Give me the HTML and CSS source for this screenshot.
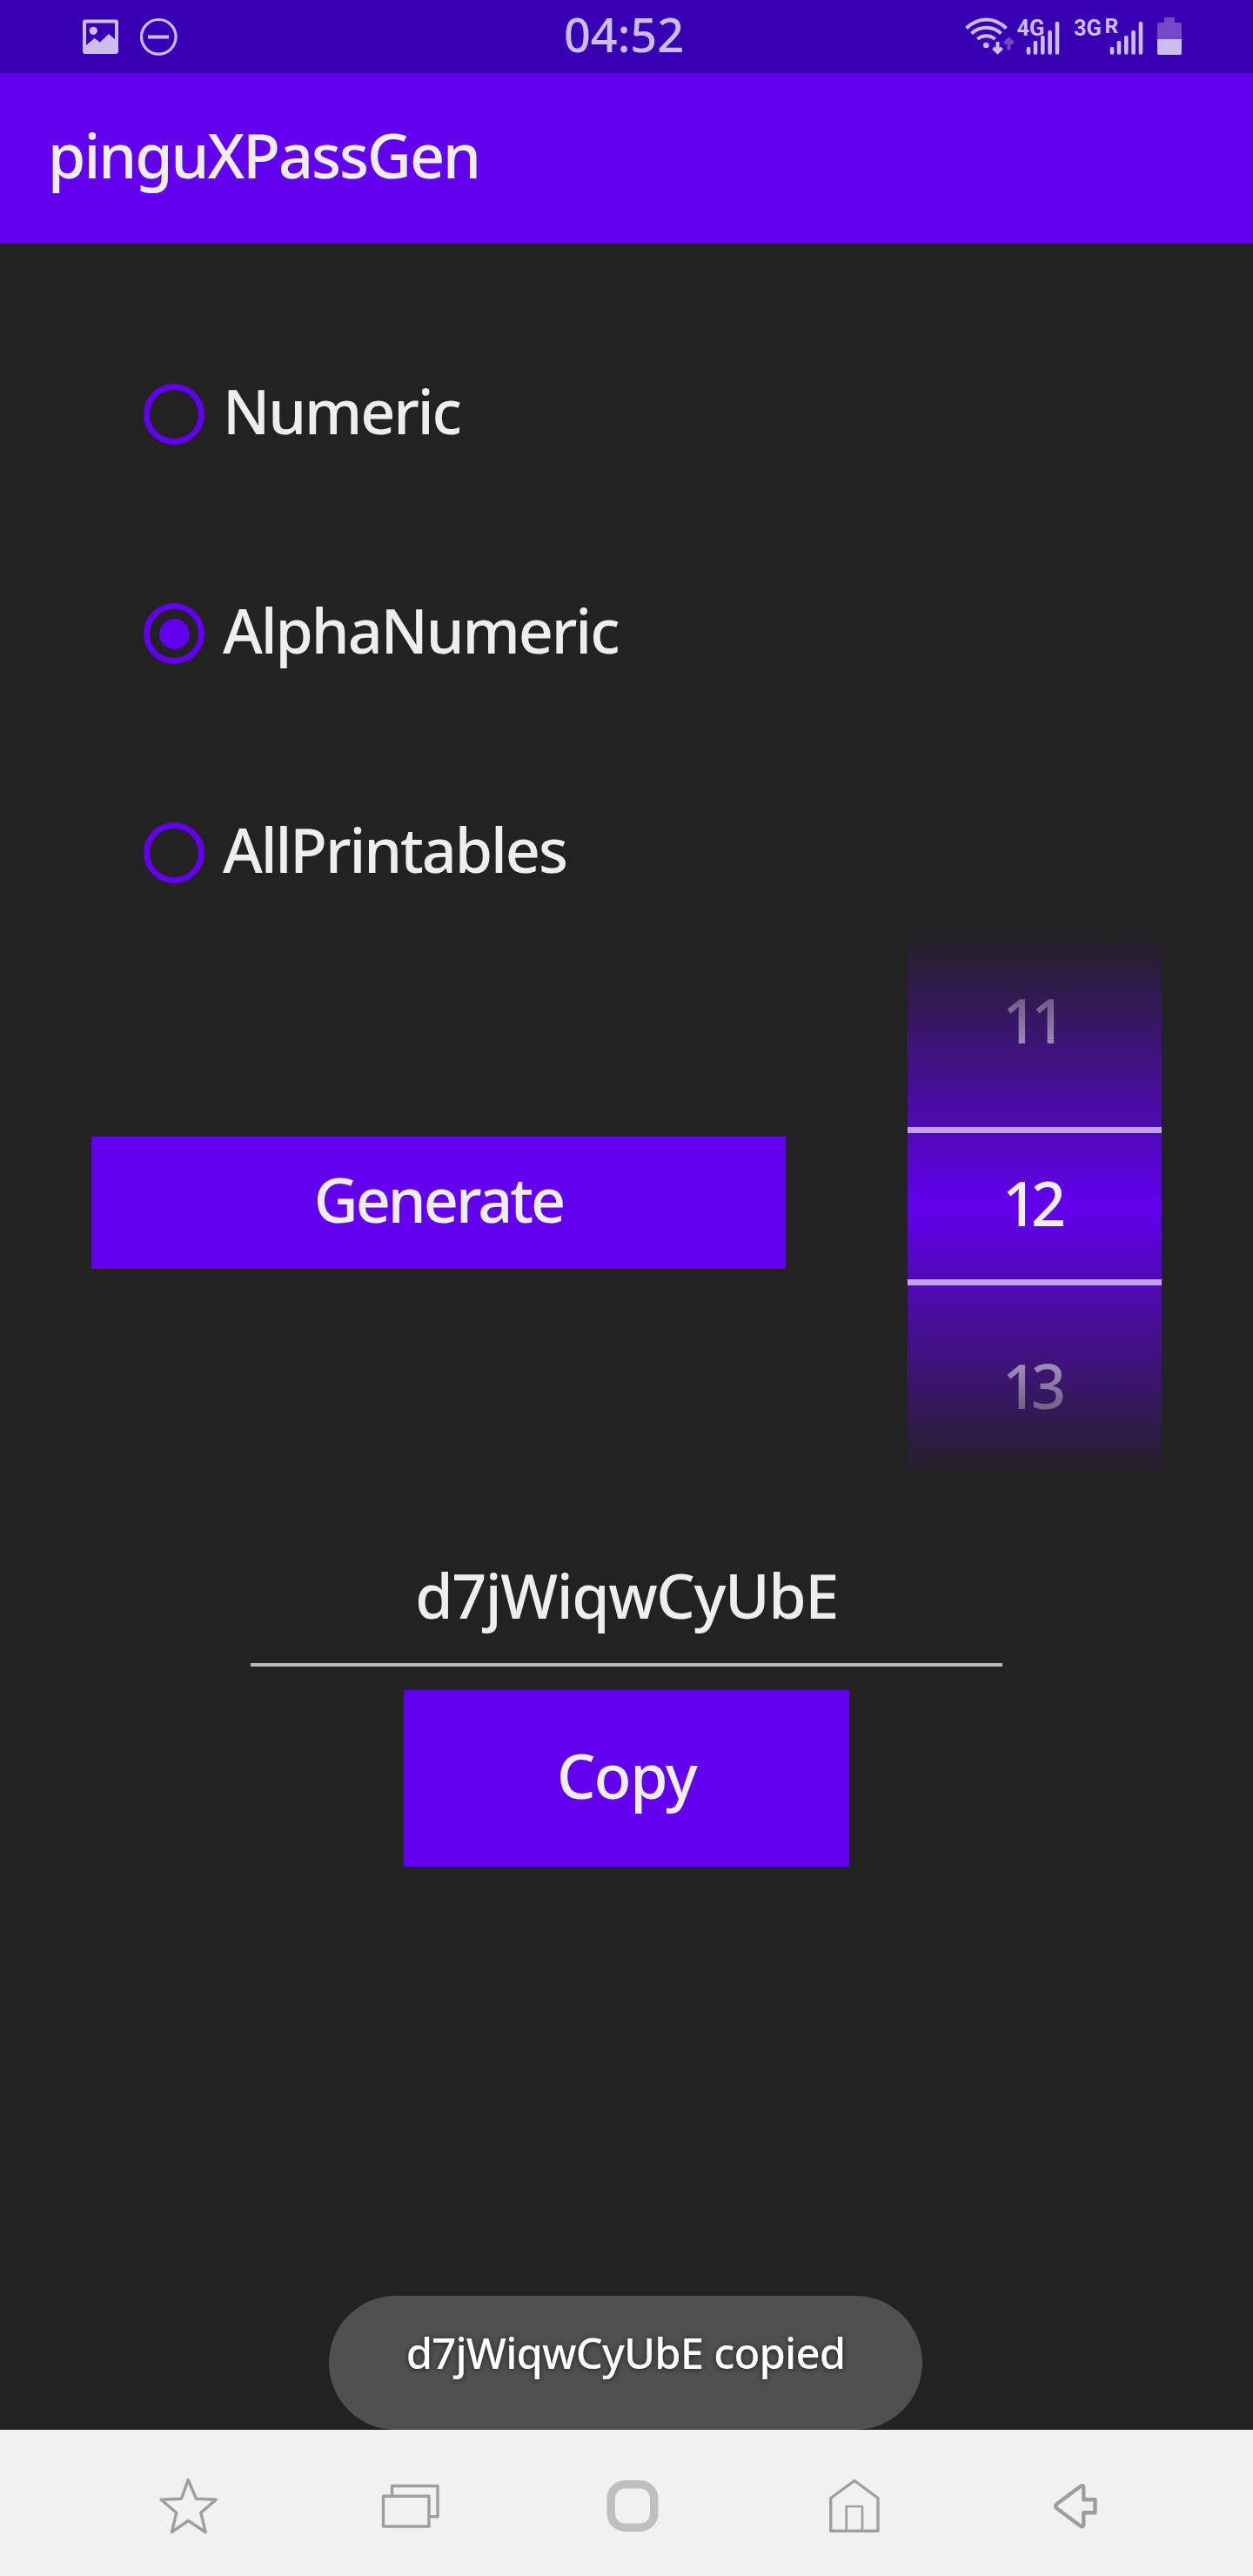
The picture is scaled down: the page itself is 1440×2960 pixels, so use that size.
FILE: index.html
```html
<!DOCTYPE html>
<html lang="en">
<head>
<meta charset="utf-8">
<title>pinguXPassGen</title>
<link rel="stylesheet" href="styles.css">
</head>
<body>
<div class="screen">
  <header class="status">
    <svg class="status-left" width="112" height="84" viewBox="92 0 112 84">
      <path fill-rule="evenodd" d="M98 22.5h35a3 3 0 0 1 3 3V59a3 3 0 0 1-3 3H98a3 3 0 0 1-3-3V25.5a3 3 0 0 1 3-3zM99 26.5V52l9.7-8.3 6 5L125 39l7 6V26.5z"/>
      <circle cx="107.3" cy="35.3" r="4.6"/>
      <circle class="line" cx="182.3" cy="42.3" r="19.8"/>
      <path d="M170 40.5h24v4h-24z"/>
    </svg>
    <span class="clock">04:52</span>
    <svg class="status-right" width="260" height="84" viewBox="1104 0 260 84">
      <g class="waves">
        <path d="M1110.5 32.5C1124 19 1143 19 1156.500 32.500"/>
        <path d="M1116.500 38.500C1126 29.500 1141 29.500 1150.500 38.500"/>
        <path d="M1123.500 45C1129 40 1138 40 1143.500 45"/>
      </g>
      <circle cx="1133.300" cy="52" r="3.300"/>
      <path class="arrow" d="M1146.500 48V60M1141.500 55l5 5 5-5"/>
      <path class="arrow dim" d="M1159.500 57.500V45M1154.500 50l5-5 5 5"/>
      <text x="1168.500" y="40.500" font-size="26" textLength="32" lengthAdjust="spacingAndGlyphs">4G</text>
      <path class="bars" d="M1182 56v4.500M1190 49v11.500M1198.300 43v17.500M1206.600 37v23.500M1215 27v33.500"/>
      <text x="1234" y="40.500" font-size="26" textLength="32" lengthAdjust="spacingAndGlyphs">3G</text>
      <text x="1269.500" y="38" font-size="24.500">R</text>
      <path class="bars" d="M1278 56v4.500M1286 49v11.500M1294.300 43v17.500M1302.600 37v23.500M1311 27v33.500"/>
      <path class="spent" d="M1338 20h12v6h6a2 2 0 0 1 2 2v17h-28V28a2 2 0 0 1 2-2h6z"/>
      <path d="M1330 45h28v16a2 2 0 0 1-2 2h-24a2 2 0 0 1-2-2z"/>
    </svg>
  </header>
  <div class="appbar"><h1>pinguXPassGen</h1></div>
  <main>
    <div class="options">
      <div class="option"><span class="radio"></span><span class="label">Numeric</span></div>
      <div class="option"><span class="radio checked"></span><span class="label">AlphaNumeric</span></div>
      <div class="option"><span class="radio"></span><span class="label">AllPrintables</span></div>
    </div>
    <div class="controls">
      <button class="generate">Generate</button>
      <div class="picker">
        <div class="values"><span>11</span><span>12</span><span>13</span></div>
        <div class="window"></div>
      </div>
    </div>
    <div class="field">d7jWiqwCyUbE</div>
    <button class="copy">Copy</button>
    <div class="toast">d7jWiqwCyUbE copied</div>
  </main>
  <nav>
    <svg width="1440" height="168" viewBox="0 2792 1440 168">
      <path d="M216.300 2849.500l9.200 21.800 22.800.9-17.500 15 5.400 22.300-19.900-13-18.800 13 5.200-22.300-17.500-15 23.300-.9z"/>
      <path d="M450.500 2868v-11.500H503v35.200h-10M440.500 2868.200H493V2903h-52.500z"/>
      <rect class="pill" x="702.200" y="2854.700" width="49.500" height="49.500" rx="16"/>
      <path d="M982 2850.500l27 20v37.700h-54.300v-37.700z"/><path class="door" d="M972.700 2908v-28H991v28"/>
      <path class="back" d="M1214.500 2877.200l27.500-20.500q3-1.500 3.300 1.500v14h13.200v15h-13.200v14q-.3 3-3.300 1.500l-27.500-20.500q-2.500-2.500 0-5z"/>
    </svg>
  </nav>
</div>
</body>
</html>
```
FILE: styles.css
```css
* { box-sizing: border-box; }
body { margin: 0; background: #222; }
.screen {
  width: 1440px;
  height: 2960px;
  display: flex;
  flex-direction: column;
  overflow: hidden;
  background: #222;
  color: #eee;
  font: 500 70px/84px "Noto Sans", "Open Sans", sans-serif;
}
.status {
  height: 84px;
  padding: 0 76px 0 92px;
  display: flex;
  justify-content: space-between;
  background: #3700b3;
  color: #cbbdee;
}
.status svg { display: block; fill: #cbbdee; }
.status-left { margin-right: 148px; }
.status text { font-family: Roboto, sans-serif; font-weight: 700; }
.status .line { fill: none; stroke: #cbbdee; stroke-width: 3.2; }
.waves, .arrow { fill: none; stroke: #cbbdee; stroke-width: 4; }
.arrow.dim { stroke: #7345c8; }
.bars { fill: none; stroke: #cbbdee; stroke-width: 4.6; stroke-linecap: round; }
.status .spent { fill: #7549c6; }
.clock { margin-right: 22px; font-size: 54px; line-height: 78px; }
.appbar {
  height: 196px;
  padding: 0 55px 8px;
  display: flex;
  align-items: center;
  background: #6200ee;
}
h1 { margin: 0; font: inherit; letter-spacing: -2px; }
main {
  position: relative;
  height: 2512px;
  padding-top: 140px;
  display: flex;
  flex-direction: column;
  align-items: center;
}
.options { align-self: stretch; display: grid; gap: 140px; padding-left: 165px; }
.option { height: 112px; display: flex; align-items: center; gap: 21px; }
.radio {
  width: 70px;
  height: 70px;
  display: grid;
  place-items: center;
  border: 7px solid #6200ee;
  border-radius: 50%;
}
.checked::after { content: ""; width: 35px; height: 35px; border-radius: 50%; background: #6200ee; }
.label { padding-bottom: 8px; letter-spacing: -2.1px; }
.controls {
  align-self: stretch;
  margin-top: 35px;
  padding: 0 105px;
  display: flex;
  justify-content: space-between;
}
button {
  border: 0;
  padding: 0 0 8px;
  background: #6200ee;
  color: #eee;
  font: inherit;
}
.generate { width: 798px; height: 152px; margin-top: 235px; letter-spacing: -3px; }
.picker {
  width: 292px;
  height: 630px;
  display: grid;
  background: linear-gradient(#6200ee00, #6200ee, #6200ee00);
}
.values, .window { grid-area: 1 / 1; }
.values {
  display: grid;
  grid-template-rows: repeat(3, 210px);
  justify-items: center;
  padding-right: 8px;
  line-height: 202px;
  letter-spacing: -7px;
  mask-image: linear-gradient(transparent, #000 240px, #000 390px, transparent);
}
.window { align-self: start; height: 182px; margin-top: 224px; border: solid #bfa3e8; border-width: 7px 0; }
.field {
  width: 864px;
  height: 124px;
  margin-top: 90px;
  border-bottom: 4px solid #b9b9b9;
  text-align: center;
  letter-spacing: -1.4px;
}
.copy { width: 512px; height: 203px; margin-top: 27px; letter-spacing: -1.5px; }
.toast {
  position: absolute;
  left: 378px;
  bottom: 0;
  width: 682px;
  height: 154px;
  border-radius: 77px;
  background: #505050;
  color: #fff;
  text-align: center;
  font-size: 49px;
  line-height: 131px;
  letter-spacing: -.85px;
  text-shadow: 0 1px 6px #0009;
}
nav { height: 168px; background: #f1f1f1; }
nav svg { display: block; fill: none; stroke: #9e9e9e; stroke-width: 3.4; stroke-linejoin: round; }
.pill { stroke: #bfbfbf; stroke-width: 9.500; }
.door { stroke-width: 2.600; }
.back { stroke-width: 4.400; }
```
